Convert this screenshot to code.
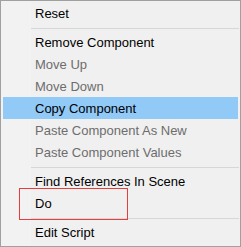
import React from "react";

type Item = { label: string; disabled?: boolean; active?: boolean } | "sep";

const items: Item[] = [
  { label: "Reset" },
  "sep",
  { label: "Remove Component" },
  { label: "Move Up", disabled: true },
  { label: "Move Down", disabled: true },
  { label: "Copy Component", active: true },
  { label: "Paste Component As New", disabled: true },
  { label: "Paste Component Values", disabled: true },
  "sep",
  { label: "Find References In Scene" },
  { label: "Do" },
  "sep",
  { label: "Edit Script" },
];

export default function App() {
  return (
    <div
      className="relative w-[241px] h-[247px] border border-[#a0a0a0] bg-[linear-gradient(to_right,#f2f2f2_30px,#f0f0f0_30px)] pt-[1px] pb-[3px] text-[13px] leading-[22px]"
      style={{ fontFamily: '"Liberation Sans", Arial, sans-serif' }}
    >
      {items.map((it, i) =>
        it === "sep" ? (
          <div key={i} className="h-[7px] pt-[4px] ml-[30px] mr-[1px]">
            <div className="h-px bg-[#d7d7d7]" />
          </div>
        ) : (
          <div
            key={i}
            className={
              "h-[22px] mx-[2px] pl-[32px] whitespace-nowrap overflow-hidden " +
              (it.active ? "bg-[#91c9f7] " : "") +
              (it.disabled ? "text-[#6d6d6d]" : "text-black")
            }
          >
            <div className="pt-[1px]">{it.label}</div>
          </div>
        )
      )}
      <div className="absolute left-[18px] top-[187px] w-[109px] h-[32px] border border-[#e53e3e]" />
    </div>
  );
}
